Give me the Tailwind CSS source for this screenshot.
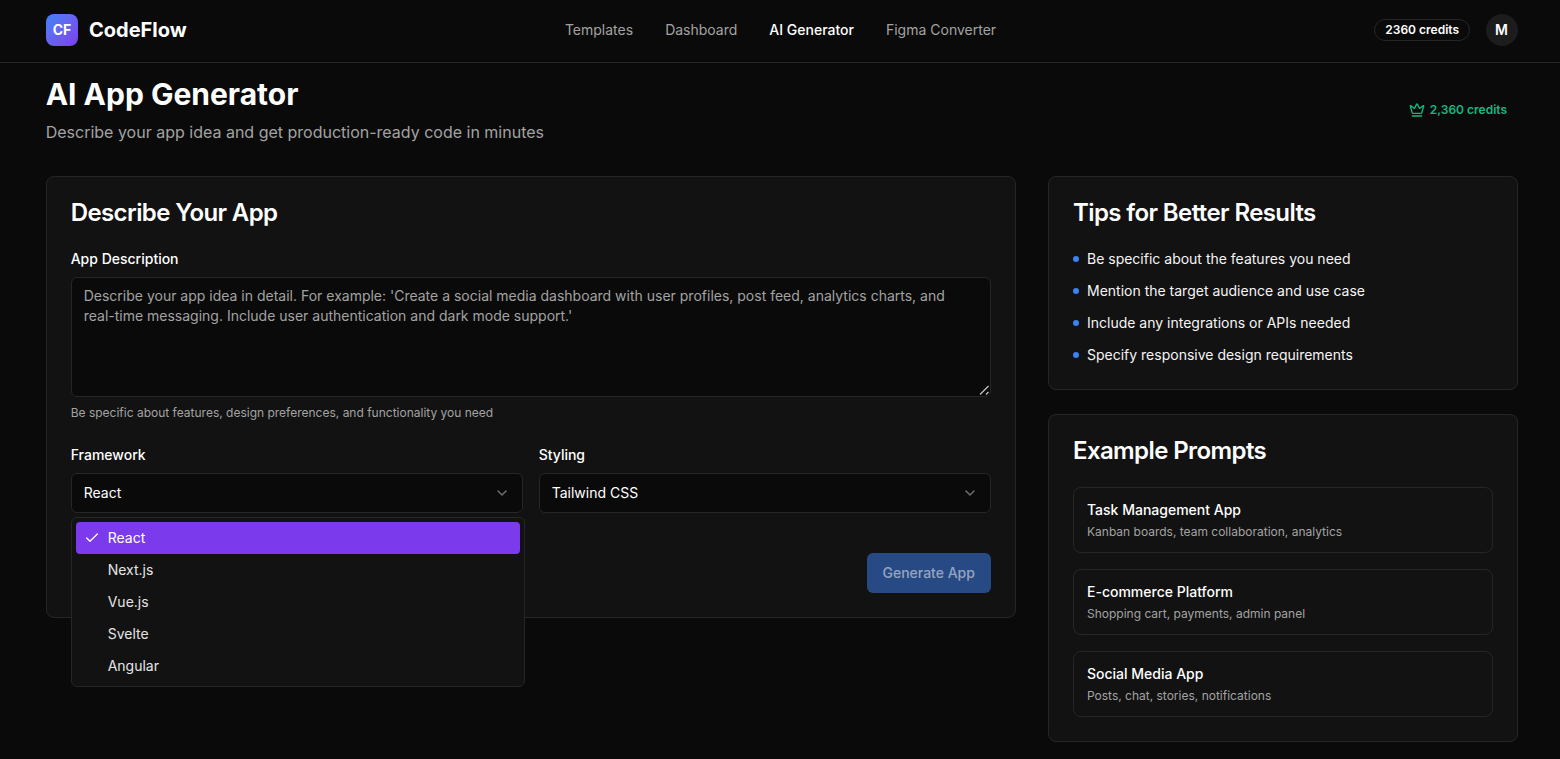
<!DOCTYPE html>
<html lang="en">
<head>
  <meta charset="UTF-8">
  <meta name="viewport" content="width=device-width, initial-scale=1.0">
  <title>CodeFlow - AI App Generator</title>
  <script src="https://cdn.jsdelivr.net/npm/@tailwindcss/browser@4"></script>
</head>
<body class="bg-[#0a0a0a] h-[759px] overflow-hidden text-white font-['Inter',sans-serif]">
  <!-- header -->
  <header class="h-[63px] border-b border-[#262626] pl-[46px] pr-[42px] pb-[2px] flex items-center justify-between">
    <div class="flex items-center gap-[11px] w-[300px]">
      <div class="w-8 h-8 rounded-lg bg-gradient-to-br from-[#3b82f6] to-[#7c3aed] flex items-center justify-center text-sm font-bold">CF</div>
      <span class="text-xl font-bold">CodeFlow</span>
    </div>
    <nav class="flex items-center gap-8 text-sm text-[#a3a3a3] ml-[-3px]">
      <a>Templates</a>
      <a>Dashboard</a>
      <a class="text-white font-medium">AI Generator</a>
      <a>Figma Converter</a>
    </nav>
    <div class="flex items-center gap-4 w-[300px] justify-end">
      <span class="h-[22px] px-[10px] rounded-full border border-[#262626] flex items-center text-xs font-semibold">2360 credits</span>
      <div class="w-8 h-8 pr-px rounded-full bg-[#1c1c1c] flex items-center justify-center text-sm font-semibold">M</div>
    </div>
  </header>

  <main class="pl-[45.7px] pr-[42px]">
    <!-- page title -->
    <div class="flex justify-between h-[114px] pt-[13px]">
      <div>
        <h1 class="text-3xl font-bold leading-[36px]">AI App Generator</h1>
        <p class="text-base text-[#a3a3a3] mt-2 leading-6">Describe your app idea and get production-ready code in minutes</p>
      </div>
      <div class="flex items-center gap-[5px] h-4 mt-[26px] mr-[11px] text-xs font-semibold text-[#10b981]">
        <svg class="w-4 h-4" viewBox="0 0 24 24" fill="none" stroke="currentColor" stroke-width="2" stroke-linecap="round" stroke-linejoin="round">
          <path d="M11.562 3.266a.5.5 0 0 1 .876 0L15.39 8.87a1 1 0 0 0 1.516.294L21.183 5.5a.5.5 0 0 1 .798.519l-2.834 10.246a1 1 0 0 1-.956.734H5.81a1 1 0 0 1-.957-.734L2.02 6.02a.5.5 0 0 1 .798-.519l4.276 3.664a1 1 0 0 0 1.516-.294z"/>
          <path d="M5 21h14"/>
        </svg>
        <span>2,360 credits</span>
      </div>
    </div>

    <div class="flex gap-[32.3px] items-start -mt-px">
      <!-- form card -->
      <section class="relative w-[970px] h-[442px] bg-[#121212] border border-[#262626] rounded-lg px-6 pt-6">
        <h2 class="text-2xl font-semibold leading-[24px] tracking-[-0.6px]">Describe Your App</h2>
        <label class="block text-sm font-medium mt-[27px] leading-[14px]">App Description</label>
        <div class="relative mt-[11px] w-[920px] h-[120px]">
          <textarea class="block w-full h-full bg-[#0a0a0a] border border-[#262626] rounded-md px-3 py-2 text-sm leading-5 placeholder:text-[#a3a3a3] outline-none [color-scheme:dark]" placeholder="Describe your app idea in detail. For example: 'Create a social media dashboard with user profiles, post feed, analytics charts, and real-time messaging. Include user authentication and dark mode support.'"></textarea>
          <!-- resize grip -->
          <svg class="absolute right-[2px] bottom-[2px] w-[10px] h-[10px] bg-[#0a0a0a] pointer-events-none" viewBox="0 0 10 10" fill="none" stroke="#c4c4c4" stroke-width="1.2"><path d="M1 9.5 9.5 1M7 9.5 9.5 7"/></svg>
        </div>
        <p class="text-xs text-[#a3a3a3] mt-2 leading-4">Be specific about features, design preferences, and functionality you need</p>

        <div class="grid grid-cols-2 gap-4 mt-[27px]">
          <div>
            <label class="block text-sm font-medium leading-[14px]">Framework</label>
            <div class="mt-[11px] h-10 bg-[#0a0a0a] border border-[#262626] rounded-md px-3 flex items-center justify-between text-sm">
              <span>React</span>
              <svg class="w-4 h-4 text-[#a3a3a3]/70" viewBox="0 0 24 24" fill="none" stroke="currentColor" stroke-width="2" stroke-linecap="round" stroke-linejoin="round"><path d="m6 9 6 6 6-6"/></svg>
            </div>
          </div>
          <div>
            <label class="block text-sm font-medium leading-[14px]">Styling</label>
            <div class="mt-[11px] h-10 bg-[#0a0a0a] border border-[#262626] rounded-md px-3 flex items-center justify-between text-sm">
              <span>Tailwind CSS</span>
              <svg class="w-4 h-4 text-[#a3a3a3]/70" viewBox="0 0 24 24" fill="none" stroke="currentColor" stroke-width="2" stroke-linecap="round" stroke-linejoin="round"><path d="m6 9 6 6 6-6"/></svg>
            </div>
          </div>
        </div>

        <div class="flex justify-end mt-[40px]">
          <button class="h-10 w-[124px] rounded-md bg-[#3b82f6]/50 text-sm font-medium text-white/50">Generate App</button>
        </div>

        <!-- open framework menu -->
        <div class="absolute left-[24px] top-[340px] w-[454px] h-[170px] bg-[#121212] border border-[#262626] rounded-md p-1 text-sm text-[#e5e5e5] z-10">
          <div class="h-8 rounded-sm bg-[#7c3aed] text-white flex items-center pl-8 relative">
            <svg class="absolute left-2 w-4 h-4" viewBox="0 0 24 24" fill="none" stroke="currentColor" stroke-width="2" stroke-linecap="round" stroke-linejoin="round"><path d="M20 6 9 17l-5-5"/></svg>
            React
          </div>
          <div class="h-8 flex items-center pl-8">Next.js</div>
          <div class="h-8 flex items-center pl-8">Vue.js</div>
          <div class="h-8 flex items-center pl-8">Svelte</div>
          <div class="h-8 flex items-center pl-8">Angular</div>
        </div>
      </section>

      <!-- side column -->
      <aside class="w-[470px] flex flex-col gap-6">
        <section class="h-[214px] bg-[#121212] border border-[#262626] rounded-lg px-6 pt-6">
          <h2 class="text-2xl font-semibold leading-[24px] tracking-[-0.6px]">Tips for Better Results</h2>
          <ul class="mt-[24px] flex flex-col gap-3 text-sm text-[#f5f5f5]">
            <li class="flex items-center gap-2 h-5"><span class="w-[6px] h-[6px] rounded-full bg-[#3b82f6]"></span>Be specific about the features you need</li>
            <li class="flex items-center gap-2 h-5"><span class="w-[6px] h-[6px] rounded-full bg-[#3b82f6]"></span>Mention the target audience and use case</li>
            <li class="flex items-center gap-2 h-5"><span class="w-[6px] h-[6px] rounded-full bg-[#3b82f6]"></span>Include any integrations or APIs needed</li>
            <li class="flex items-center gap-2 h-5"><span class="w-[6px] h-[6px] rounded-full bg-[#3b82f6]"></span>Specify responsive design requirements</li>
          </ul>
        </section>

        <section class="h-[328px] bg-[#121212] border border-[#262626] rounded-lg px-6 pt-6">
          <h2 class="text-2xl font-semibold leading-[24px] tracking-[-0.6px]">Example Prompts</h2>
          <div class="mt-[24px] flex flex-col gap-4">
            <div class="h-[66px] border border-[#262626] rounded-lg px-[13px] pt-3">
              <div class="text-sm font-medium leading-5">Task Management App</div>
              <div class="text-xs text-[#a3a3a3] leading-4 mt-1">Kanban boards, team collaboration, analytics</div>
            </div>
            <div class="h-[66px] border border-[#262626] rounded-lg px-[13px] pt-3">
              <div class="text-sm font-medium leading-5">E-commerce Platform</div>
              <div class="text-xs text-[#a3a3a3] leading-4 mt-1">Shopping cart, payments, admin panel</div>
            </div>
            <div class="h-[66px] border border-[#262626] rounded-lg px-[13px] pt-3">
              <div class="text-sm font-medium leading-5">Social Media App</div>
              <div class="text-xs text-[#a3a3a3] leading-4 mt-1">Posts, chat, stories, notifications</div>
            </div>
          </div>
        </section>
      </aside>
    </div>
  </main>
</body>
</html>
